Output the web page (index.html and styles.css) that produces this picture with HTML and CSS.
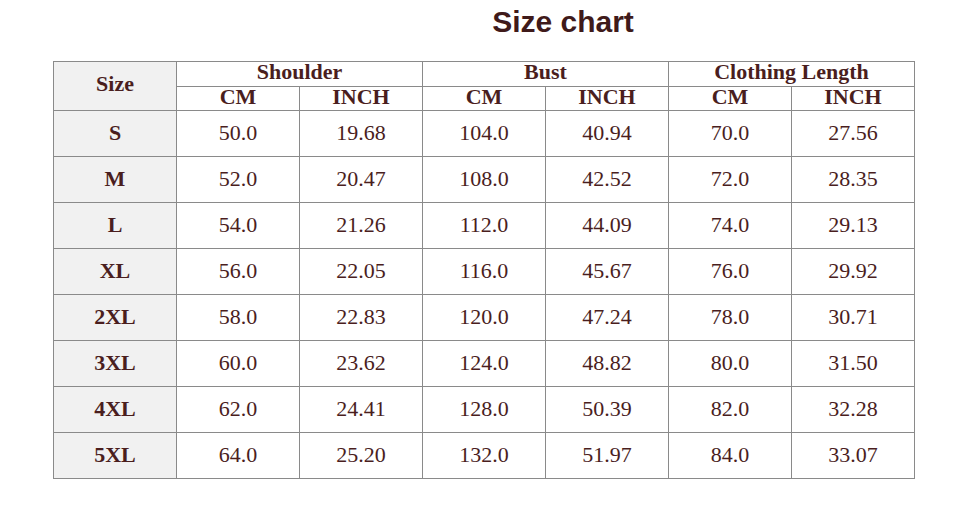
FILE: index.html
```html
<!DOCTYPE html>
<html>
<head>
<meta charset="utf-8">
<link rel="stylesheet" href="styles.css">
</head>
<body>
<div class="page">
  <h1 class="title">Size chart</h1>
  <table class="chart">
    <colgroup>
      <col class="c"><col class="c"><col class="c"><col class="c"><col class="c"><col class="c"><col class="c">
    </colgroup>
    <thead>
      <tr class="h1">
        <th rowspan="2" class="size">Size</th>
        <th colspan="2">Shoulder</th>
        <th colspan="2">Bust</th>
        <th colspan="2">Clothing Length</th>
      </tr>
      <tr class="h2">
        <th>CM</th><th>INCH</th><th>CM</th><th>INCH</th><th>CM</th><th>INCH</th>
      </tr>
    </thead>
    <tbody>
      <tr><th class="size">S</th><td>50.0</td><td>19.68</td><td>104.0</td><td>40.94</td><td>70.0</td><td>27.56</td></tr>
      <tr><th class="size">M</th><td>52.0</td><td>20.47</td><td>108.0</td><td>42.52</td><td>72.0</td><td>28.35</td></tr>
      <tr><th class="size">L</th><td>54.0</td><td>21.26</td><td>112.0</td><td>44.09</td><td>74.0</td><td>29.13</td></tr>
      <tr><th class="size">XL</th><td>56.0</td><td>22.05</td><td>116.0</td><td>45.67</td><td>76.0</td><td>29.92</td></tr>
      <tr><th class="size">2XL</th><td>58.0</td><td>22.83</td><td>120.0</td><td>47.24</td><td>78.0</td><td>30.71</td></tr>
      <tr><th class="size">3XL</th><td>60.0</td><td>23.62</td><td>124.0</td><td>48.82</td><td>80.0</td><td>31.50</td></tr>
      <tr><th class="size">4XL</th><td>62.0</td><td>24.41</td><td>128.0</td><td>50.39</td><td>82.0</td><td>32.28</td></tr>
      <tr><th class="size">5XL</th><td>64.0</td><td>25.20</td><td>132.0</td><td>51.97</td><td>84.0</td><td>33.07</td></tr>
    </tbody>
  </table>
</div>
</body>
</html>
```
FILE: styles.css
```css
html, body {
  margin: 0;
  padding: 0;
  background: #ffffff;
}
.page {
  width: 973px;
  height: 516px;
  padding-top: 4px;
  box-sizing: border-box;
}
.title {
  margin: 0 0 21px 0;
  padding-left: 153px;
  text-align: center;
  font-family: "Liberation Sans", Arial, sans-serif;
  font-weight: bold;
  font-size: 30px;
  line-height: 36px;
  color: #3f1a1a;
}
.chart {
  margin-left: 53px;
  border-collapse: collapse;
  table-layout: fixed;
  width: 862px;
  font-family: "Liberation Serif", "Times New Roman", serif;
  color: #4a1e1e;
}
.chart .c {
  width: 123px;
}
.chart th, .chart td {
  border: 1px solid #8a8a8a;
  padding: 0 0 2px 0;
  text-align: center;
  vertical-align: middle;
  line-height: 20px;
}
.chart thead th {
  line-height: 16px;
  padding-bottom: 4px;
}
.chart th {
  font-weight: bold;
  font-size: 22px;
}
.chart td {
  font-size: 22px;
  font-weight: normal;
}
.chart th.size {
  background: #f1f1f1;
}
.h1 { height: 25px; }
.h2 { height: 24px; }
.chart tbody tr { height: 46px; }
```
